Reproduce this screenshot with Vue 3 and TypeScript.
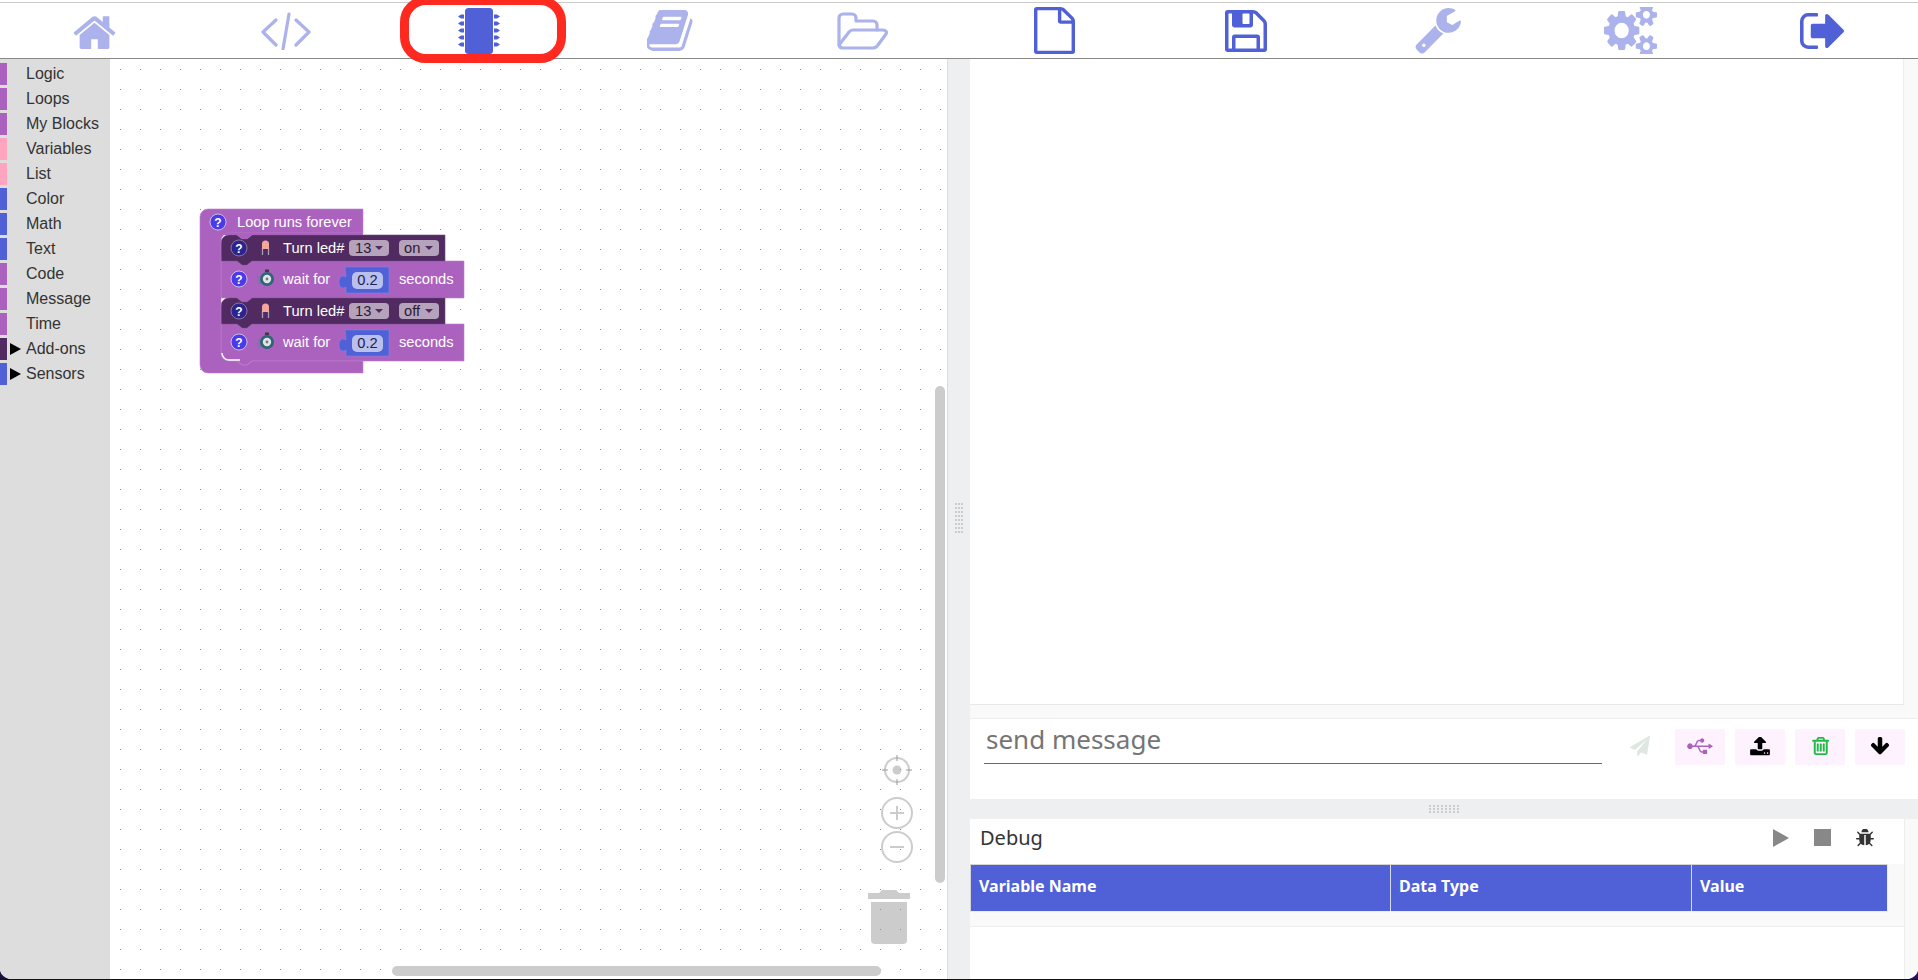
<script setup lang="ts">
interface NavItem {
  name: string
  box: string
  width: number
  height: number
  d: string
  active?: boolean
}

const navItems: NavItem[] = [
  { name: 'home', box: '64 128 1664 1408', width: 43, height: 36, d: 'M1472 992v480q0 26-19 45t-45 19h-384v-384h-256v384h-384q-26 0-45-19t-19-45v-480q0-1 .5-3t.5-3l575-474 575 474q1 2 1 6zm223-69l-62 74q-8 9-21 11h-3q-13 0-21-7l-692-577-692 577q-12 8-24 7-13-2-21-11l-62-74q-8-10-7-23.5t11-22.5l719-599q32-26 76-26t76 26l244 204v-195q0-14 9-23t23-9h192q14 0 23 9t9 23v408l219 182q10 8 11 21.5t-7 23.5z' },
  { name: 'code', box: '', width: 50, height: 38, d: '' },
  { name: 'chip', box: '', width: 44, height: 46, d: '', active: true },
  { name: 'book', box: '96 128 1650 1536', width: 46, height: 41, d: 'M1703 478q40 57 18 129l-275 906q-19 64-76.5 107.5t-122.5 43.5h-923q-77 0-148.5-53.5t-99.5-131.5q-24-67-2-127 0-4 3-27t4-37q1-8-3-21.5t-3-19.5q2-11 8-21t16.5-23.5 16.5-23.5q23-38 45-91.5t30-91.5q3-10 .5-30t-.5-28q3-11 17-28t17-23q21-36 42-92t25-90q1-9-2.5-32t.5-28q4-13 22-30.5t22-22.5q19-26 42.5-84.5t27.5-96.5q1-8-3-25.5t-2-26.5q2-8 9-18t18-23 17-21q8-12 16.5-30.5t15-35 16-36 19.5-32 26.5-23.5 36-11.5 47.5 5.5l-1 3q38-9 51-9h761q74 0 114 56t18 130l-274 906q-36 119-71.5 153.5t-128.5 34.5h-869q-27 0-38 15-11 16-1 43 24 70 144 70h923q29 0 56-15.5t35-41.5l300-987q7-22 5-57 38 15 59 43zm-1064 2q-4 13 2 22.5t20 9.5h608q13 0 25.5-9.5t16.5-22.5l21-64q4-13-2-22.5t-20-9.5h-608q-13 0-25.5 9.5t-16.5 22.5zm-83 256q-4 13 2 22.5t20 9.5h608q13 0 25.5-9.5t16.5-22.5l21-64q4-13-2-22.5t-20-9.5h-608q-13 0-25.5 9.5t-16.5 22.5z' },
  { name: 'folder', box: '', width: 51, height: 38, d: '' },
  { name: 'file', box: '128 0 1536 1792', width: 41, height: 47, active: true, d: 'M1596 380q28 28 48 76t20 88v1152q0 40-28 68t-68 28h-1344q-40 0-68-28t-28-68v-1600q0-40 28-68t68-28h896q40 0 88 20t76 48zm-444-244v376h376q-10-29-22-41l-313-313q-12-12-41-22zm384 1528v-1024h-416q-40 0-68-28t-28-68v-416h-768v1536h1280z' },
  { name: 'save', box: '128 128 1536 1536', width: 42, height: 42, active: true, d: 'M512 1536h768v-384h-768v384zm896 0h128v-896q0-14-10-38.5t-20-34.5l-281-281q-10-10-34-20t-39-10v416q0 40-28 68t-68 28h-576q-40 0-68-28t-28-68v-416h-128v1280h128v-416q0-40 28-68t68-28h832q40 0 68 28t28 68v416zm-384-928v-320q0-13-9.5-22.5t-22.5-9.5h-192q-13 0-22.5 9.5t-9.5 22.5v320q0 13 9.5 22.5t22.5 9.5h192q13 0 22.5-9.5t9.5-22.5zm640 32v928q0 40-28 68t-68 28h-1344q-40 0-68-28t-28-68v-1344q0-40 28-68t68-28h928q40 0 88 20t76 48l280 280q28 28 48 76t20 88z' },
  { name: 'wrench', box: '64 128 1664 1664', width: 46, height: 46, d: 'M448 1472q0-26-19-45t-45-19-45 19-19 45 19 45 45 19 45-19 19-45zm644-420l-682 682q-37 37-90 37-52 0-91-37l-106-108q-38-36-38-90 0-53 38-91l681-681q39 98 114.5 173.5t173.5 114.5zm634-435q0 39-23 106-47 134-164.5 217.5t-258.5 83.5q-185 0-316.5-131.5t-131.5-316.5 131.5-316.5 316.5-131.5q58 0 121.5 16.5t107.5 46.5q16 11 16 28t-16 28l-293 169v224l193 107q5-3 79-48.5t135.5-81 70.5-35.5q15 0 23.5 10t8.5 25z' },
  { name: 'cogs', box: '0 128 1920 1536', width: 53, height: 47, d: 'M896 896q0-106-75-181t-181-75-181 75-75 181 75 181 181 75 181-75 75-181zm768 512q0-52-38-90t-90-38-90 38-38 90q0 53 37.5 90.5t90.5 37.5 90.5-37.5 37.5-90.5zm0-1024q0-52-38-90t-90-38-90 38-38 90q0 53 37.5 90.5t90.5 37.5 90.5-37.5 37.5-90.5zm-384 421v185q0 10-7 19.5t-16 10.5l-155 24q-11 35-32 76 34 48 90 115 7 11 7 20 0 12-7 19-23 30-82.5 89.5t-78.5 59.5q-11 0-21-7l-115-90q-37 19-77 31-11 108-23 155-7 24-30 24h-186q-11 0-20-7.5t-10-17.5l-23-153q-34-10-75-31l-118 89q-7 7-20 7-11 0-21-8-144-133-144-160 0-9 7-19 10-14 41-53t47-61q-23-44-35-82l-152-24q-10-1-17-9.5t-7-19.5v-185q0-10 7-19.5t16-10.5l155-24q11-35 32-76-34-48-90-115-7-11-7-20 0-12 7-20 22-30 82-89t79-59q11 0 21 7l115 90q34-18 77-32 11-108 23-154 7-24 30-24h186q11 0 20 7.5t10 17.5l23 153q34 10 75 31l118-89q8-7 20-7 11 0 21 8 144 133 144 160 0 8-7 19-12 16-42 54t-45 60q23 48 34 82l152 23q10 2 17 10.5t7 19.5zm640 533v140q0 16-149 31-12 27-30 52 51 113 51 138 0 4-4 7-122 71-124 71-8 0-46-47t-52-68q-20 2-30 2t-30-2q-14 21-52 68t-46 47q-2 0-124-71-4-3-4-7 0-25 51-138-18-25-30-52-149-15-149-31v-140q0-16 149-31 13-29 30-52-51-113-51-138 0-4 4-7 4-2 35-20t59-34 30-16q8 0 46 46.5t52 67.5q20-2 30-2t30 2q51-71 92-112l6-2q4 0 124 70 4 3 4 7 0 25-51 138 17 23 30 52 149 15 149 31zm0-1024v140q0 16-149 31-12 27-30 52 51 113 51 138 0 4-4 7-122 71-124 71-8 0-46-47t-52-68q-20 2-30 2t-30-2q-14 21-52 68t-46 47q-2 0-124-71-4-3-4-7 0-25 51-138-18-25-30-52-149-15-149-31v-140q0-16 149-31 13-29 30-52-51-113-51-138 0-4 4-7 4-2 35-20t59-34 30-16q8 0 46 46.5t52 67.5q20-2 30-2t30 2q51-71 92-112l6-2q4 0 124 70 4 3 4 7 0 25-51 138 17 23 30 52 149 15 149 31z' },
  { name: 'exit', box: '64 256 1568 1280', width: 44, height: 36, active: true, d: 'M704 1440q0 4 1 20t.5 26.5-3 23.5-10 19.5-20.5 6.5h-320q-119 0-203.5-84.5t-84.5-203.5v-704q0-119 84.5-203.5t203.5-84.5h320q13 0 22.5 9.5t9.5 22.5q0 4 1 20t.5 26.5-3 23.5-10 19.5-20.5 6.5h-320q-66 0-113 47t-47 113v704q0 66 47 113t113 47h312l11.5 1 11.5 3 8 5.5 7 9 2 13.5zm928-544q0 26-19 45l-544 544q-19 19-45 19t-45-19-19-45v-288h-448q-26 0-45-19t-19-45v-384q0-26 19-45t45-19h448v-288q0-26 19-45t45-19 45 19l544 544q19 19 19 45z' },
]

const purple = '#ab62bf'
const pink = '#ffa5bf'
const blue = '#5060d6'
const dark = '#512a62'

const categories = [
  { label: 'Logic', color: purple },
  { label: 'Loops', color: purple },
  { label: 'My Blocks', color: purple },
  { label: 'Variables', color: pink },
  { label: 'List', color: pink },
  { label: 'Color', color: blue },
  { label: 'Math', color: blue },
  { label: 'Text', color: blue },
  { label: 'Code', color: purple },
  { label: 'Message', color: purple },
  { label: 'Time', color: purple },
  { label: 'Add-ons', color: dark, more: true },
  { label: 'Sensors', color: blue, more: true },
]

const chipPins = [8.5, 15.5, 22.5, 29.5, 36.5]

// rows are listed bottom first so each block's tab lies over the notch of the next one
const ledRows = [{ y: 298, state: 'off' }, { y: 235, state: 'on' }]
const waitRows = [{ y: 324 }, { y: 261 }]
const gripDots = [0, 1, 2, 3, 4, 5, 6, 7]
const gripRows = [0, 1, 2]

const columns = ['Variable Name', 'Data Type', 'Value']

const bug = 'M1696 960q0 26-19 45t-45 19h-224q0 171-67 290l208 209q19 19 19 45t-19 45q-18 19-45 19t-45-19l-198-197q-5 5-15 13t-42 28.5-65 36.5-82 29-97 13v-896h-128v896q-51 0-101.5-13.5t-87-33-66-39-43.5-32.5l-15-14-183 207q-20 21-48 21-24 0-43-16-19-18-20.5-44.5t15.5-46.5l202-227q-58-114-58-274h-224q-26 0-45-19t-19-45 19-45 45-19h224v-294l-173-173q-19-19-19-45t19-45 45-19 45 19l173 173h844l173-173q19-19 45-19t45 19 19 45-19 45l-173 173v294h224q26 0 45 19t19 45zm-480-576h-640q0-133 93.5-226.5t226.5-93.5 226.5 93.5 93.5 226.5z'
const plane = 'M1764 11q33 24 27 64l-256 1536q-5 29-32 45-14 8-31 8-11 0-24-5l-453-185-242 295q-18 23-49 23-13 0-22-4-19-7-30.5-23.5t-11.5-36.5v-349l864-1059-1069 925-395-162q-37-14-40-55-2-40 32-59l1664-960q15-9 32-9 20 0 36 11z'
const usb = 'M2288 890q16 8 16 26t-16 26l-320 192q-8 5-16 5-9 0-16-4-16-10-16-28v-128h-858q37 58 83 165 16 37 24.5 55t24 49 27 47 27 34 31 26 33 8h96v-96q0-14 9-23t23-9h320q14 0 23 9t9 23v320q0 14-9 23t-23 9h-320q-14 0-23-9t-9-23v-96h-96q-32 0-61-10t-51-23.5-45-40.5-37-46-33.5-57-28.5-57.5-28-60.5q-23-53-37-81.5t-36-65-44.5-53.5-46.5-17h-360q-22 84-91 138t-157 54q-106 0-181-75t-75-181 75-181 181-75q88 0 157 54t91 138h104q24 0 46.5-17t44.5-53.5 36-65 37-81.5q19-41 28-60.5t28.5-57.5 33.5-57 37-46 45-40.5 51-23.5 61-10h107q21-57 70-92.5t111-35.5q80 0 136 56t56 136-56 136-136 56q-62 0-111-35.5t-70-92.5h-107q-17 0-33 8t-31 26-27 34-27 47-24 49-24.5 55q-46 107-83 165h1114v-128q0-18 16-28t32 1z'
const upload = 'M1344 1472q0-26-19-45t-45-19-45 19-19 45 19 45 45 19 45-19 19-45zm256 0q0-26-19-45t-45-19-45 19-19 45 19 45 45 19 45-19 19-45zm128-224v320q0 40-28 68t-68 28h-1472q-40 0-68-28t-28-68v-320q0-40 28-68t68-28h427q21 56 70.5 92t110.5 36h256q61 0 110.5-36t70.5-92h427q40 0 68 28t28 68zm-325-648q-17 40-59 40h-256v448q0 26-19 45t-45 19h-256q-26 0-45-19t-19-45v-448h-256q-42 0-59-40-17-39 14-69l448-448q18-19 45-19t45 19l448 448q31 30 14 69z'
const trash = 'M704 736v576q0 14-9 23t-23 9h-64q-14 0-23-9t-9-23v-576q0-14 9-23t23-9h64q14 0 23 9t9 23zm256 0v576q0 14-9 23t-23 9h-64q-14 0-23-9t-9-23v-576q0-14 9-23t23-9h64q14 0 23 9t9 23zm256 0v576q0 14-9 23t-23 9h-64q-14 0-23-9t-9-23v-576q0-14 9-23t23-9h64q14 0 23 9t9 23zm128 724v-948h-896v948q0 22 7 40.5t14.5 27 10.5 8.5h832q3 0 10.5-8.5t14.5-27 7-40.5zm-672-1076h448l-48-117q-7-9-17-11h-317q-10 2-17 11zm928 32v64q0 14-9 23t-23 9h-96v948q0 83-47 143.5t-113 60.5h-832q-66 0-113-58.5t-47-141.5v-952h-96q-14 0-23-9t-9-23v-64q0-14 9-23t23-9h309l70-167q15-37 54-63t79-26h320q40 0 79 26t54 63l70 167h309q14 0 23 9t9 23z'
const arrowDown = 'M1675 832q0 53-37 90l-651 652q-39 37-91 37-53 0-90-37l-651-652q-38-36-38-90 0-53 38-91l74-75q39-37 91-37 53 0 90 37l294 294v-704q0-52 38-90t90-38h128q52 0 90 38t38 90v704l294-294q37-37 90-37 52 0 91 37l75 75q37 39 37 91z'
</script>

<template>
  <div class="app">
    <header class="nav">
      <div v-for="item in navItems" :key="item.name" class="nav-item" :class="{ active: item.active }">
        <svg v-if="item.name === 'code'" :width="item.width" :height="item.height" viewBox="0 0 50 38" fill="none" stroke="currentColor" stroke-width="3.2" stroke-linecap="round" stroke-linejoin="round">
          <path d="M15 8 2 20l13 13M35 8l13 12-13 13M28 2l-6 35" />
        </svg>
        <svg v-else-if="item.name === 'chip'" :width="item.width" :height="item.height" viewBox="0 0 44 46">
          <rect x="9" y="0" width="28" height="46" rx="3.5" fill="currentColor" />
          <g v-for="y in chipPins" :key="y" fill="currentColor">
            <path :d="`M2 ${y}l3-2h3v4H5z`" />
            <path :d="`M44 ${y}l-3-2h-3v4h3z`" />
          </g>
        </svg>
        <svg v-else-if="item.name === 'folder'" :width="item.width" :height="item.height" viewBox="0 0 51 38" fill="none" stroke="currentColor" stroke-width="3.2" stroke-linecap="round" stroke-linejoin="round">
          <path d="M2 32V6a4 4 0 0 1 4-4h9a4 4 0 0 1 4 4v3h17a4 4 0 0 1 4 4v5" />
          <path d="M2 33 12 20a5 5 0 0 1 4-2h30c3 0 4 2 3 4l-8 11a6 6 0 0 1-5 3H6a4 4 0 0 1-4-3" />
        </svg>
        <svg v-else :width="item.width" :height="item.height" :viewBox="item.box" preserveAspectRatio="none">
          <path :d="item.d" fill="currentColor" />
        </svg>
      </div>
      <div class="nav-mark"></div>
    </header>

    <main class="main">
      <section class="blockly">
        <aside class="toolbox">
          <div v-for="cat in categories" :key="cat.label" class="category">
            <span class="swatch" :style="{ background: cat.color }"></span>
            <span class="caret" :class="{ shown: cat.more }"></span>
            <span class="cat-label">{{ cat.label }}</span>
          </div>
        </aside>
        <div class="canvas">
          <svg class="blocks" width="290" height="185" viewBox="190 200 290 185">
            <!-- led and wait rows -->
            <g v-for="row in waitRows" :key="row.y">
              <path :d="`M221 ${row.y}H237l5 4h5l5-4H464V${row.y + 37}H252l-5 4h-5l-5-4H221Z`" fill="#ab62bf" stroke="#bd81ce" stroke-width=".6" />
              <circle cx="239" :cy="row.y + 18" r="8" fill="#4a3bea" stroke="#e6d4ec" stroke-width=".8" />
              <text x="239" :y="row.y + 22.5" class="help">?</text>
              <g :transform="`translate(267 ${row.y + 18})`">
                <path d="M-10-2h3M-10 1h3M-9 4h3" stroke="#4a8a96" stroke-width="1.2" />
                <rect x="-2" y="-9.5" width="4" height="2.5" fill="#3c3c3c" />
                <circle r="7" fill="#2f6673" />
                <circle r="4.2" fill="#dfe6e8" />
                <circle r="1.4" fill="#777" />
              </g>
              <text x="283" :y="row.y + 23" class="label">wait for</text>
              <path :d="`M345 ${row.y + 6}H389V${row.y + 32}H346V${row.y + 26}c-3 2-7 1-7-5 0-6 4-7 7-5Z`" fill="#5060d6" stroke="#7a86e2" stroke-width=".6" />
              <rect x="352" :y="row.y + 11" width="31" height="17" rx="5" fill="#b9c0ee" />
              <text x="367.5" :y="row.y + 24" class="value">0.2</text>
              <text x="399" :y="row.y + 23" class="label">seconds</text>
            </g>
            <g v-for="row in ledRows" :key="row.y">
              <path :d="`M229 ${row.y}H237l5 4h5l5-4H445V${row.y + 26}H252l-5 4h-5l-5-4H221V${row.y + 8}a8 8 0 0 1 8-8Z`" fill="#512a62" stroke="#6d4a7c" stroke-width=".6" />
              <circle cx="239" :cy="row.y + 13" r="8" fill="#2a2390" stroke="#8a72a0" stroke-width="1" />
              <text x="239" :y="row.y + 17.5" class="help">?</text>
              <g :transform="`translate(265.5 ${row.y + 13})`">
                <path d="M-3 0v7M3 0v7" stroke="#a99db0" stroke-width="1.3" />
                <path d="M-3.5 1v-5a3.5 3.5 0 0 1 7 0v5z" fill="#f3a69b" />
              </g>
              <text x="283" :y="row.y + 18" class="label">Turn led#</text>
              <rect x="349" :y="row.y + 5" width="40" height="16" rx="4" fill="#b5a3bb" />
              <text x="355" :y="row.y + 18" class="field">13</text>
              <path :d="`M375 ${row.y + 11}h8l-4 4z`" fill="#512a62" />
              <rect x="399" :y="row.y + 5" width="40" height="16" rx="4" fill="#b5a3bb" />
              <text x="404" :y="row.y + 18" class="field">{{ row.state }}</text>
              <path :d="`M425 ${row.y + 11}h8l-4 4z`" fill="#512a62" />
            </g>
            <!-- loop wrapper -->
            <path d="M208 209H363V233H229a8 8 0 0 0-8 8V353a8 8 0 0 0 8 8H237l5 4h5l5-4H363V373H208a8 8 0 0 1-8-8V217a8 8 0 0 1 8-8Z" fill="#ab62bf" stroke="#bd81ce" stroke-width=".6" />
            <path d="M221 233H363V235H252l-5 4h-5l-5-4H221Z" fill="#ab62bf" />
            <path d="M222 353a7 7 0 0 0 7 7H240" fill="none" stroke="#fff" stroke-width="1.4" />
            <circle cx="218" cy="222" r="8" fill="#4a3bea" stroke="#e6d4ec" stroke-width=".8" />
            <text x="218" y="226.5" class="help">?</text>
            <text x="237" y="227" class="label">Loop runs forever</text>
          </svg>

          <svg class="zoom-tools" width="70" height="140" viewBox="0 0 70 140" fill="none" stroke="#999" stroke-opacity=".5" stroke-width="2">
            <circle cx="35" cy="16" r="12" />
            <circle cx="35" cy="16" r="4.5" fill="#999" fill-opacity=".5" stroke="none" />
            <path d="M35 1v6M35 25v6M20 16h6M44 16h6" />
            <circle cx="35" cy="59" r="15" />
            <path d="M35 52v14M28 59h14" />
            <circle cx="35" cy="93" r="15" />
            <path d="M28 93h14" />
          </svg>
          <svg class="bin" width="42" height="56" viewBox="0 0 42 56" fill="#999" fill-opacity=".5">
            <path d="M0 11V5H11l3-3h14l3 3h11v6Z" />
            <path d="M3 14H39V52a4 4 0 0 1-4 4H7a4 4 0 0 1-4-4Z" />
          </svg>
          <div class="scroll-v"></div>
          <div class="scroll-h"></div>
        </div>
      </section>

      <div class="gutter-v">
        <div class="grip-v">
          <div v-for="r in gripDots" :key="r" class="grip-line">
            <i></i><i></i><i></i>
          </div>
        </div>
      </div>

      <section class="right">
        <div class="monitor">
          <div class="monitor-out"></div>
          <div class="monitor-foot"></div>
        </div>
        <div class="send-row">
          <div class="send-input">send message</div>
          <svg class="plane" width="20" height="20" viewBox="0 0 1792 1792"><path :d="plane" fill="#dfe7e3" /></svg>
          <div class="tool-btns">
            <button class="tool-btn"><svg width="26" height="20" viewBox="0 0 2304 1792"><path :d="usb" fill="#ab62bf" /></svg></button>
            <button class="tool-btn"><svg width="20" height="19" viewBox="64 128 1664 1600"><path :d="upload" fill="#000" /></svg></button>
            <button class="tool-btn"><svg width="18" height="18" viewBox="128 128 1408 1536"><path :d="trash" fill="#22bb44" stroke="#22bb44" stroke-width="40" /></svg></button>
            <button class="tool-btn"><svg width="18" height="18" viewBox="128 128 1536 1536"><path :d="arrowDown" fill="#000" /></svg></button>
          </div>
        </div>
        <div class="gutter-h">
          <div class="grip-h">
            <div v-for="r in gripRows" :key="r" class="grip-row">
              <i v-for="d in gripDots" :key="d"></i>
            </div>
          </div>
        </div>
        <div class="debug">
          <div class="debug-body">
            <div class="debug-head">
              <span class="debug-title">Debug</span>
              <div class="debug-actions">
                <svg width="16" height="18" viewBox="0 0 16 18"><path d="M0 0 16 9 0 18Z" fill="#888" /></svg>
                <svg width="17" height="17" viewBox="0 0 17 17"><rect width="17" height="17" fill="#888" /></svg>
                <svg width="18" height="18" viewBox="96 128 1600 1536"><path :d="bug" fill="#333" /></svg>
              </div>
            </div>
            <div class="var-table">
              <div class="var-header">
                <div v-for="col in columns" :key="col" class="var-col">{{ col }}</div>
              </div>
            </div>
          </div>
          <div class="debug-side"></div>
        </div>
      </section>
      <svg class="corner corner-left" width="9" height="8" viewBox="0 0 9 8"><path d="M0 0Q2 6 9 8H0Z" fill="#1a1040" /></svg>
      <svg class="corner corner-right" width="9" height="8" viewBox="0 0 9 8"><path d="M9 0Q7 6 0 8H9Z" fill="#2a1060" /></svg>
    </main>
  </div>
</template>

<style scoped>
.app {
  width: 1918px;
  height: 980px;
  display: flex;
  flex-direction: column;
  overflow: hidden;
  background: #fff;
}
.nav {
  position: relative;
  height: 57px;
  flex-shrink: 0;
  margin: 2px 0 0 -2px;
  box-sizing: border-box;
  display: grid;
  grid-template-columns: repeat(10, 192px);
  width: 1920px;
  border-top: 1px solid #ccc;
  border-bottom: 1px solid #888;
}
.nav-item {
  display: flex;
  align-items: center;
  justify-content: center;
  color: #abb2ec;
}
.nav-item.active {
  color: #5060d6;
}
.nav-mark {
  position: absolute;
  left: 402px;
  top: -7px;
  width: 166px;
  height: 67px;
  box-sizing: border-box;
  border: 9px solid #ff2a1f;
  border-radius: 26px;
}
.main {
  position: relative;
  flex: 1;
  min-height: 0;
  display: flex;
  border-bottom: 1px solid #111;
}
.corner {
  position: absolute;
  bottom: 0;
}
.corner-left {
  left: 0;
}
.corner-right {
  right: 0;
}
.blockly {
  width: 947px;
  flex-shrink: 0;
  display: flex;
  overflow: hidden;
}
.toolbox {
  width: 110px;
  flex-shrink: 0;
  background: #ddd;
  padding-top: 4px;
  box-sizing: border-box;
}
.category {
  height: 25px;
  display: flex;
  align-items: flex-start;
  font: 16px/22px "Liberation Sans", Arial, sans-serif;
  color: #333;
}
.swatch {
  width: 7px;
  height: 22px;
  flex-shrink: 0;
}
.caret {
  width: 0;
  height: 0;
  margin: 5px 5px 0 3px;
  border-left: 11px solid transparent;
  border-top: 6px solid transparent;
  border-bottom: 6px solid transparent;
}
.caret.shown {
  border-left-color: #000;
}
.canvas {
  position: relative;
  flex: 1;
  background-image: radial-gradient(circle at 10.5px 10.5px, #8a8a8a .5px, transparent .9px);
  background-size: 20px 20px;
}
.blocks {
  position: absolute;
  left: 80px;
  top: 141px;
}
.label {
  font: 14.67px "Liberation Sans", Arial, sans-serif;
  fill: #fff;
}
.field {
  font: 14.67px "Liberation Sans", Arial, sans-serif;
  fill: #2c1a35;
}
.value {
  font: 14.67px "Liberation Sans", Arial, sans-serif;
  fill: #1d2350;
  text-anchor: middle;
}
.help {
  font: bold 12px "Liberation Sans", Arial, sans-serif;
  fill: #fff;
  text-anchor: middle;
}
.zoom-tools {
  position: absolute;
  left: 752px;
  top: 695px;
}
.bin {
  position: absolute;
  left: 758px;
  top: 829px;
}
.scroll-v {
  position: absolute;
  left: 825px;
  top: 327px;
  width: 10px;
  height: 497px;
  border-radius: 5px;
  background: #ccc;
}
.scroll-h {
  position: absolute;
  left: 282px;
  top: 907px;
  width: 489px;
  height: 10px;
  border-radius: 5px;
  background: #ccc;
}
.gutter-v {
  width: 23px;
  flex-shrink: 0;
  box-sizing: border-box;
  display: flex;
  align-items: center;
  justify-content: center;
  background: #eeeff1;
  border-left: 1px solid #ddd;
}
.grip-v {
  display: flex;
  flex-direction: column;
  gap: 2px;
  margin-top: -2px;
}
.grip-line {
  display: flex;
  gap: 1px;
}
.grip-line i,
.grip-row i {
  width: 2px;
  height: 2px;
  background: #ccc;
}
.right {
  flex: 1;
  min-width: 0;
  display: flex;
  flex-direction: column;
}
.monitor {
  flex: 1;
  display: flex;
  flex-direction: column;
  background: #f9f9f9;
  border-bottom: 1px solid #eee;
}
.monitor-out {
  flex: 1;
  margin-right: 14px;
  background: #fff;
  border-right: 1px solid #eee;
  border-bottom: 1px solid #e8e8e8;
}
.monitor-foot {
  height: 13px;
}
.send-row {
  height: 80px;
  flex-shrink: 0;
  display: flex;
  align-items: flex-start;
  padding: 0 13px 0 14px;
  box-sizing: border-box;
}
.send-input {
  width: 618px;
  flex-shrink: 0;
  box-sizing: border-box;
  height: 45px;
  padding-left: 2px;
  border-bottom: 1px solid #5060d6;
  font: 26px/40px "Noto Sans", sans-serif;
  color: #757575;
}
.plane {
  margin: 17px 0 0 28px;
}
.tool-btns {
  display: flex;
  gap: 10px;
  margin: 10px 0 0 25px;
}
.tool-btn {
  width: 50px;
  height: 36px;
  padding: 0 0 2px;
  border: none;
  border-radius: 2px;
  background: #fdf2fe;
  display: flex;
  align-items: center;
  justify-content: center;
}
.gutter-h {
  height: 20px;
  flex-shrink: 0;
  background: #eeeff1;
  display: flex;
  align-items: center;
  justify-content: center;
}
.grip-h {
  display: flex;
  flex-direction: column;
  gap: 1px;
}
.grip-row {
  display: flex;
  gap: 2px;
}
.debug {
  height: 160px;
  flex-shrink: 0;
  display: flex;
}
.debug-body {
  flex: 1;
  min-width: 0;
}
.debug-side {
  width: 13px;
  background: #f9f9f9;
  border-left: 1px solid #eee;
}
.debug-head {
  height: 45px;
  box-sizing: border-box;
  display: flex;
  align-items: center;
  justify-content: space-between;
  padding: 0 30px 8px 10px;
}
.debug-title {
  font: 20px "Noto Sans", sans-serif;
  color: #333;
}
.debug-actions {
  display: flex;
  align-items: center;
  gap: 25px;
}
.var-table {
  height: 63px;
  box-sizing: border-box;
  background: #f9f9f9;
  border-bottom: 1px solid #eee;
}
.var-header {
  display: grid;
  grid-template-columns: 419px 301px 198px;
  width: 918px;
  height: 48px;
  box-sizing: border-box;
  background: #5060d6;
  border: 1px solid #d4d4d4;
  border-right: 1px solid #eee;
  border-bottom: 1px solid #eee;
}
.var-col {
  padding-left: 8px;
  font: bold 16px/42px "Noto Sans", sans-serif;
  color: #fff;
  border-left: 1px solid #d6daf5;
}
.var-col:first-child {
  border-left: none;
}
</style>
